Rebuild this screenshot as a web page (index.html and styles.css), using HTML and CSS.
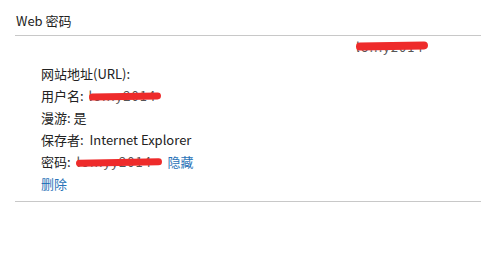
FILE: index.html
```html
<!DOCTYPE html>
<html lang="zh-CN">
<head>
<meta charset="UTF-8">
<title>Web 密码</title>
<link rel="stylesheet" href="styles.css">
</head>
<body>

<div class="panel">
    <h2 class="title">Web 密码</h2>

    <div class="cred-list">
        <!-- Row header -->
        <div class="cred-row">
            <span class="cred-site"></span>
            <span class="masked masked-top"><span class="hidden-text">lo...y2014</span><span class="scribble scribble-top"></span></span>
        </div>

        <!-- Expanded details -->
        <div class="cred-details">
            <div class="line">网站地址(URL):</div>
            <div class="line">用户名: <span class="masked masked-user"><span class="hidden-text">lo...y2014</span><span class="scribble"></span></span></div>
            <div class="line">漫游: 是</div>
            <div class="line">保存者:&nbsp; Internet Explorer</div>
            <div class="line">密码:&nbsp; <span class="masked masked-pass"><span class="hidden-text">lo...yy2014</span><span class="scribble"></span></span> <a class="link" href="#">隐藏</a></div>
            <div class="line"><a class="link" href="#">删除</a></div>
        </div>
    </div>
</div>

</body>
</html>
```

FILE: styles.css
```css
/* Basic Styles */
body {
    font-family: "Noto Sans CJK SC", "Noto Sans", sans-serif;
    margin: 0;
    padding: 0;
    background-color: #fff;
    color: #222;
    font-size: 13px;
}
.panel {
    padding: 12px 0 0 16px;
}
.title {
    font-size: 13px;
    font-weight: normal;
    margin: 0 0 5px 0;
    line-height: 18px;
}
/* List Styles */
.cred-list {
    border-top: 1px solid #c8c8c8;
    border-bottom: 1px solid #c8c8c8;
    margin-left: -1px;
}
.cred-row {
    display: flex;
    height: 25px;
    align-items: flex-start;
    padding-top: 2px;
}
.cred-site {
    width: 341px;
}
.cred-details {
    padding: 0 0 6px 26px;
}
.line {
    line-height: 22px;
}
/* Masked values */
.masked {
    position: relative;
    display: inline-block;
    vertical-align: top;
    height: 22px;
    white-space: nowrap;
}
.masked-top {
    width: 72px;
    line-height: 18px;
}
.masked-user {
    width: 72px;
    margin-left: 2px;
}
.masked-pass {
    width: 86px;
}
.hidden-text {
    color: #555;
    letter-spacing: 1px;
}
.scribble {
    position: absolute;
    background-color: #ee2b2b;
    border-radius: 4px;
    height: 7px;
    top: 8px;
    left: 0;
    right: 0;
    transform: rotate(-1deg);
}
.scribble-top {
    height: 8px;
    top: 4px;
}
.link {
    color: #2a73b8;
    text-decoration: none;
    margin-left: 2px;
}
.line .link:first-child {
    margin-left: 0;
}
```
